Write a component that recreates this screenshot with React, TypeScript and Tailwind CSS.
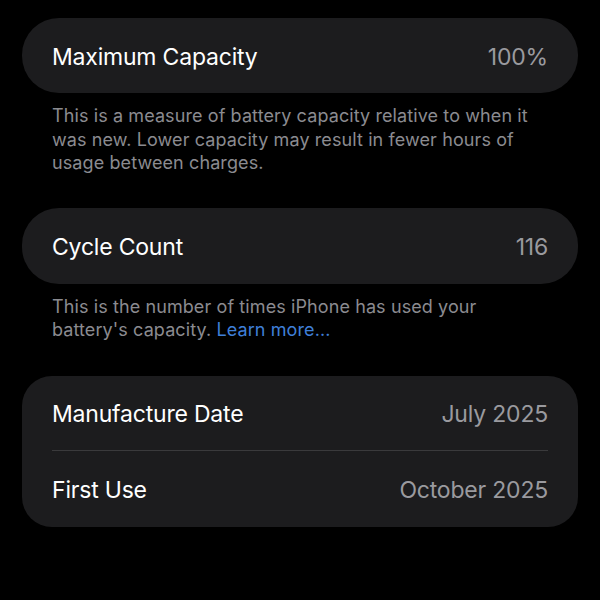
const font = { fontFamily: 'Inter, "Noto Sans", sans-serif' }

function Row({ label, value }: { label: string; value: string }) {
  return (
    <div className="flex items-center justify-between pt-[3px]">
      <span className="text-[23px] text-white tracking-[-0.2px]">{label}</span>
      <span className="text-[23px] text-[#9a9a9f] tracking-[-0.2px]">{value}</span>
    </div>
  )
}

export default function App() {
  return (
    <div className="w-[600px] h-[600px] bg-black px-[22px] pt-[18px]" style={font}>
      <div className="h-[75px] rounded-[37px] bg-[#1c1c1e] px-[30px] flex flex-col justify-center">
        <Row label="Maximum Capacity" value="100%" />
      </div>
      <p className="px-[30px] pt-[11px] text-[18px] leading-[23.5px] tracking-[0.1px] text-[#8b8b90]">
        This is a measure of battery capacity relative to when it was new. Lower capacity may result in fewer hours of usage between charges.
      </p>

      <div className="mt-[33px] h-[76px] rounded-[37px] bg-[#1c1c1e] px-[30px] flex flex-col justify-center">
        <Row label="Cycle Count" value="116" />
      </div>
      <p className="px-[30px] pt-[11px] text-[18px] leading-[23.5px] tracking-[0.1px] text-[#8b8b90]">
        This is the number of times iPhone has used your battery's capacity.{' '}
        <a className="text-[#3f7fd8]">Learn more...</a>
      </p>

      <div className="mt-[34px] rounded-[30px] bg-[#1c1c1e] px-[30px]">
        <div className="h-[74px] flex flex-col justify-center">
          <Row label="Manufacture Date" value="July 2025" />
        </div>
        <div className="h-px bg-[#3a3a3c]" />
        <div className="h-[76px] flex flex-col justify-center">
          <Row label="First Use" value="October 2025" />
        </div>
      </div>
    </div>
  )
}
